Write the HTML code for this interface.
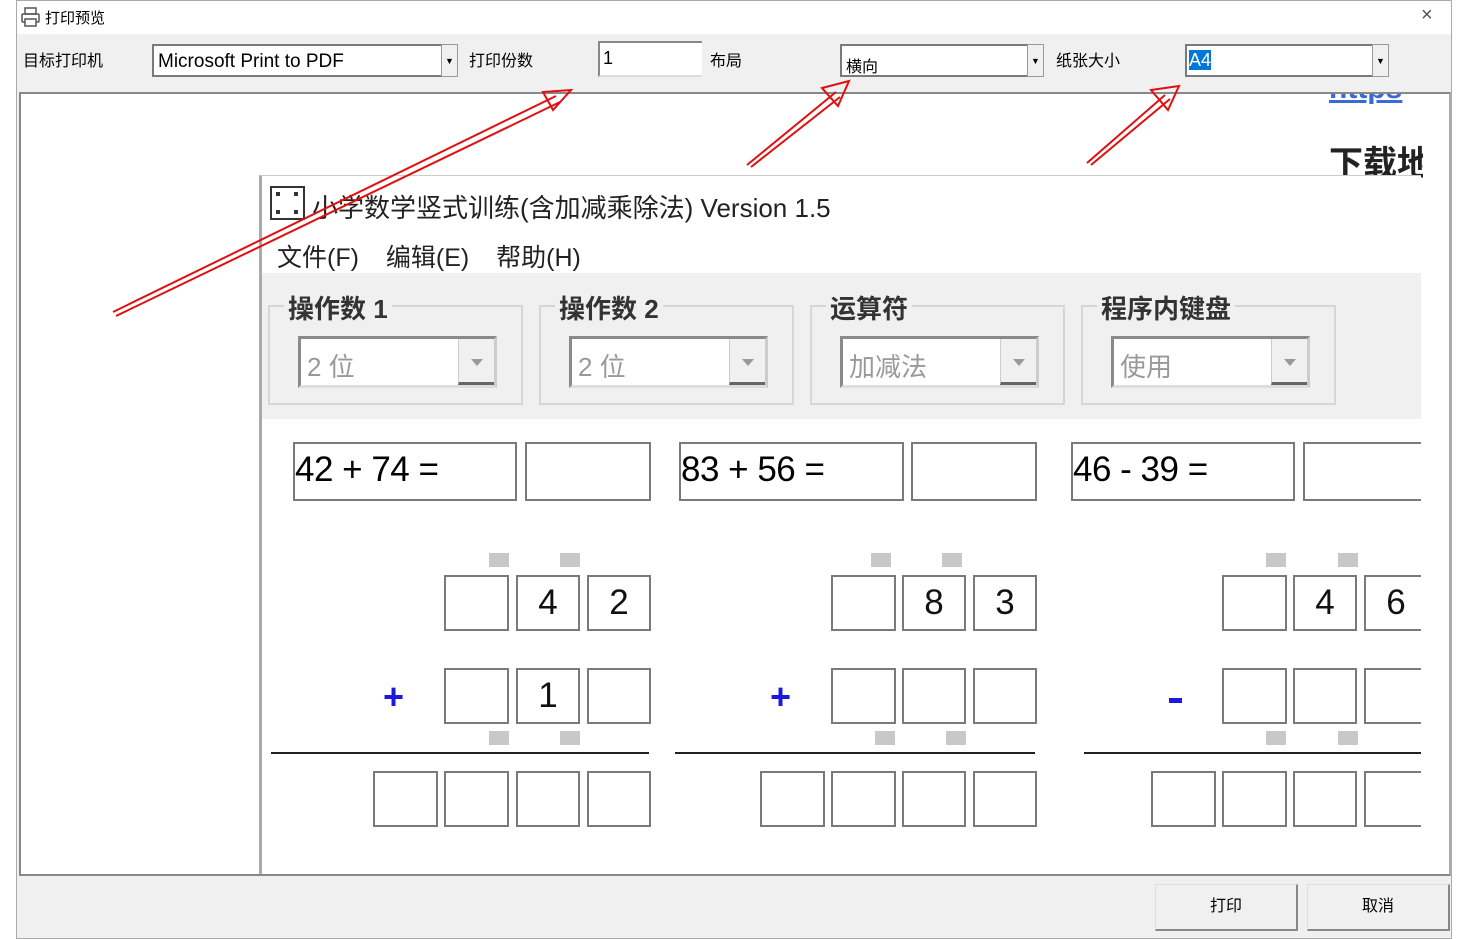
<!DOCTYPE html>
<html><head><meta charset="utf-8"><style>
*{margin:0;padding:0;box-sizing:border-box}
body{width:1467px;height:939px;position:relative;overflow:hidden;background:#fff;font-family:"Liberation Sans","Noto Sans CJK SC",sans-serif;color:#000}
.a{position:absolute}
.b{position:absolute;border:2px solid #7a7a7a;background:#fff}
.sq{position:absolute;width:20px;height:14px;background:#c8c8c8}
.d{position:absolute;font-size:35px;text-align:center;line-height:52px;color:#111}
.cb{position:absolute;background:#fff;border:1px solid #7a7a7a;border-right:none}
.cba{position:absolute;width:17px;background:#f0f0f0;border:1px solid #999;font-size:9px;text-align:center}
.grp{position:absolute;border:2px solid #d6d6d6;height:100px;width:255px;top:305px}
.gl{position:absolute;top:-18px;left:14px;background:#f0f0f0;font-size:26px;color:#333;padding:0 4px;font-weight:bold}
.combo{position:absolute;left:28px;top:29px;width:199px;height:52px;background:#fff;border:3px solid #8a8a8a;border-right-color:#ccc;border-bottom-color:#ddd;font-size:26px;color:#999;padding:8px 6px}
.combo i{position:absolute;right:0;top:0;width:36px;height:46px;background:#f0f0f0;border-left:1px solid #ccc;border-bottom:3px solid #666}
.combo i:after{content:"";position:absolute;left:12px;top:20px;border:6px solid transparent;border-top:7px solid #999}
.eq{font-size:35px;line-height:52px;letter-spacing:-0.5px}
</style></head><body>
<div class="a" style="left:16px;top:0;width:1436px;height:939px;background:#f0f0f0;border:1px solid #aaa"></div>
<div class="a" style="left:17px;top:1px;width:1434px;height:33px;background:#fff"></div>
<svg class="a" style="left:20px;top:6px" width="22" height="22"><g fill="none" stroke="#555" stroke-width="1.5"><rect x="5" y="2" width="11" height="6"/><rect x="2" y="8" width="17" height="8" rx="1"/><rect x="5" y="13" width="11" height="7" fill="#fff"/></g></svg>
<div class="a" style="left:45px;top:7px;font-size:15px">打印预览</div>
<div class="a" style="left:1421px;top:4px;font-size:20px;color:#555">×</div>
<div class="a" style="left:23px;top:47px;font-size:16px">目标打印机</div>
<div class="cb" style="left:152px;top:44px;width:290px;height:33px;border-width:2px;font-size:19px;padding:5px 4px">Microsoft Print to PDF</div>
<div class="cba" style="left:441px;top:44px;height:33px;line-height:33px">▼</div>
<div class="a" style="left:469px;top:47px;font-size:16px">打印份数</div>
<div class="a" style="left:598px;top:41px;width:104px;height:36px;background:#fff;border:2px solid #888;border-right:none;border-bottom-color:#ddd;font-size:18px;padding:5px 3px">1</div>
<div class="a" style="left:710px;top:47px;font-size:16px">布局</div>
<div class="cb" style="left:840px;top:44px;width:188px;height:33px;border-width:2px;font-size:16px;padding:7px 4px">横向</div>
<div class="cba" style="left:1027px;top:44px;height:33px;line-height:33px">▼</div>
<div class="a" style="left:1056px;top:47px;font-size:16px">纸张大小</div>
<div class="cb" style="left:1185px;top:44px;width:188px;height:33px;border-width:2px;font-size:18px;padding:4px 2px"><span style="background:#0078d7;color:#fff">A4</span></div>
<div class="cba" style="left:1372px;top:44px;height:33px;line-height:33px">▼</div>
<div class="a" style="left:19px;top:92px;width:1432px;height:784px;background:#fff;border:2px solid #888;border-right-color:#aaa;overflow:hidden">
  <div class="a" style="left:1308px;top:-22px;font-size:30px;font-weight:bold;color:#3a6ad8;text-decoration:underline">https</div>
  <div class="a" style="left:1308px;top:42px;font-size:34px;font-weight:bold;color:#222;width:95px;overflow:hidden;white-space:nowrap">下载地</div>
  <div class="a" style="left:1402px;top:0;width:30px;height:784px;background:#fff"></div>
</div>
<div class="a" style="left:259px;top:175px;width:1162px;height:699px;background:#fff;border-left:3px solid #aaa;border-top:1px solid #ccc;overflow:hidden">
  <div class="a" style="left:8px;top:10px;width:35px;height:34px;border:2px solid #333"></div>
  <div class="a" style="left:14px;top:16px;width:4px;height:4px;background:#333"></div>
  <div class="a" style="left:32px;top:16px;width:4px;height:4px;background:#333"></div>
  <div class="a" style="left:14px;top:34px;width:4px;height:4px;background:#333"></div>
  <div class="a" style="left:32px;top:34px;width:4px;height:4px;background:#333"></div>
  <div class="a" style="left:50px;top:12px;font-size:26px;color:#222">小学数学竖式训练(含加减乘除法) Version 1.5</div>
  <div class="a" style="left:15px;top:62px;font-size:25px;color:#222;word-spacing:20px">文件(F) 编辑(E) 帮助(H)</div>
  <div class="a" style="left:0;top:97px;width:1162px;height:146px;background:#f0f0f0"></div>
</div>
<div class="grp" style="left:268px"><div class="gl">操作数 1</div><div class="combo">2 位<i></i></div></div>
<div class="grp" style="left:539px"><div class="gl">操作数 2</div><div class="combo">2 位<i></i></div></div>
<div class="grp" style="left:810px"><div class="gl">运算符</div><div class="combo">加减法<i></i></div></div>
<div class="grp" style="left:1081px"><div class="gl">程序内键盘</div><div class="combo">使用<i></i></div></div>

<div class="b eq" style="left:293px;top:442px;width:224px;height:59px">42 + 74 =</div>
<div class="b" style="left:525px;top:442px;width:126px;height:59px"></div>
<div class="b eq" style="left:679px;top:442px;width:225px;height:59px">83 + 56 =</div>
<div class="b" style="left:911px;top:442px;width:126px;height:59px"></div>
<div class="b eq" style="left:1071px;top:442px;width:224px;height:59px">46 - 39 =</div>
<div class="b" style="left:1303px;top:442px;width:130px;height:59px"></div>

<div class="sq" style="left:489px;top:553px"></div><div class="sq" style="left:560px;top:553px"></div>
<div class="b" style="left:444px;top:575px;width:65px;height:56px"></div>
<div class="b d" style="left:516px;top:575px;width:64px;height:56px">4</div>
<div class="b d" style="left:587px;top:575px;width:64px;height:56px">2</div>
<div class="a" style="left:383px;top:676px;font-size:36px;color:#1a1adc;font-weight:bold">+</div>
<div class="b" style="left:444px;top:668px;width:65px;height:56px"></div>
<div class="b d" style="left:516px;top:668px;width:64px;height:56px">1</div>
<div class="b" style="left:587px;top:668px;width:64px;height:56px"></div>
<div class="sq" style="left:489px;top:731px"></div><div class="sq" style="left:560px;top:731px"></div>
<div class="a" style="left:271px;top:752px;width:378px;height:2px;background:#222"></div>
<div class="b" style="left:373px;top:771px;width:65px;height:56px"></div>
<div class="b" style="left:444px;top:771px;width:65px;height:56px"></div>
<div class="b" style="left:516px;top:771px;width:64px;height:56px"></div>
<div class="b" style="left:587px;top:771px;width:64px;height:56px"></div>

<div class="sq" style="left:871px;top:553px"></div><div class="sq" style="left:942px;top:553px"></div>
<div class="b" style="left:831px;top:575px;width:65px;height:56px"></div>
<div class="b d" style="left:902px;top:575px;width:64px;height:56px">8</div>
<div class="b d" style="left:973px;top:575px;width:64px;height:56px">3</div>
<div class="a" style="left:770px;top:676px;font-size:36px;color:#1a1adc;font-weight:bold">+</div>
<div class="b" style="left:831px;top:668px;width:65px;height:56px"></div>
<div class="b" style="left:902px;top:668px;width:64px;height:56px"></div>
<div class="b" style="left:973px;top:668px;width:64px;height:56px"></div>
<div class="sq" style="left:875px;top:731px"></div><div class="sq" style="left:946px;top:731px"></div>
<div class="a" style="left:675px;top:752px;width:360px;height:2px;background:#222"></div>
<div class="b" style="left:760px;top:771px;width:65px;height:56px"></div>
<div class="b" style="left:831px;top:771px;width:65px;height:56px"></div>
<div class="b" style="left:902px;top:771px;width:64px;height:56px"></div>
<div class="b" style="left:973px;top:771px;width:64px;height:56px"></div>

<div class="sq" style="left:1266px;top:553px"></div><div class="sq" style="left:1338px;top:553px"></div>
<div class="b" style="left:1222px;top:575px;width:65px;height:56px"></div>
<div class="b d" style="left:1293px;top:575px;width:64px;height:56px">4</div>
<div class="b d" style="left:1364px;top:575px;width:64px;height:56px">6</div>
<div class="a" style="left:1169px;top:698px;width:13px;height:5px;background:#1a1adc"></div>
<div class="b" style="left:1222px;top:668px;width:65px;height:56px"></div>
<div class="b" style="left:1293px;top:668px;width:64px;height:56px"></div>
<div class="b" style="left:1364px;top:668px;width:64px;height:56px"></div>
<div class="sq" style="left:1266px;top:731px"></div><div class="sq" style="left:1338px;top:731px"></div>
<div class="a" style="left:1084px;top:752px;width:340px;height:2px;background:#222"></div>
<div class="b" style="left:1151px;top:771px;width:65px;height:56px"></div>
<div class="b" style="left:1222px;top:771px;width:65px;height:56px"></div>
<div class="b" style="left:1293px;top:771px;width:64px;height:56px"></div>
<div class="b" style="left:1364px;top:771px;width:64px;height:56px"></div>
<div class="a" style="left:1421px;top:420px;width:28px;height:454px;background:#fff"></div>

<svg class="a" style="left:0;top:0" width="1467" height="939">
<g fill="none" stroke="#e01010" stroke-width="2">
<path d="M113,312 L556,96 M116,316 L560,102 M543,92 L571,90 L553,110 Z"/>
<path d="M747,165 L836,92 M751,167 L840,97 M822,88 L849,81 L838,106 Z"/>
<path d="M1087,163 L1165,95 M1091,165 L1170,99 M1151,90 L1179,86 L1168,110 Z"/>
</g></svg>

<div class="a" style="left:1155px;top:884px;width:143px;height:47px;background:#f0f0f0;border:1px solid #ddd;border-right:2px solid #888;border-bottom:2px solid #888;font-size:16px;text-align:center;line-height:44px">打印</div>
<div class="a" style="left:1307px;top:884px;width:143px;height:47px;background:#f0f0f0;border:1px solid #ddd;border-right:2px solid #888;border-bottom:2px solid #888;font-size:16px;text-align:center;line-height:44px">取消</div>
</body></html>
